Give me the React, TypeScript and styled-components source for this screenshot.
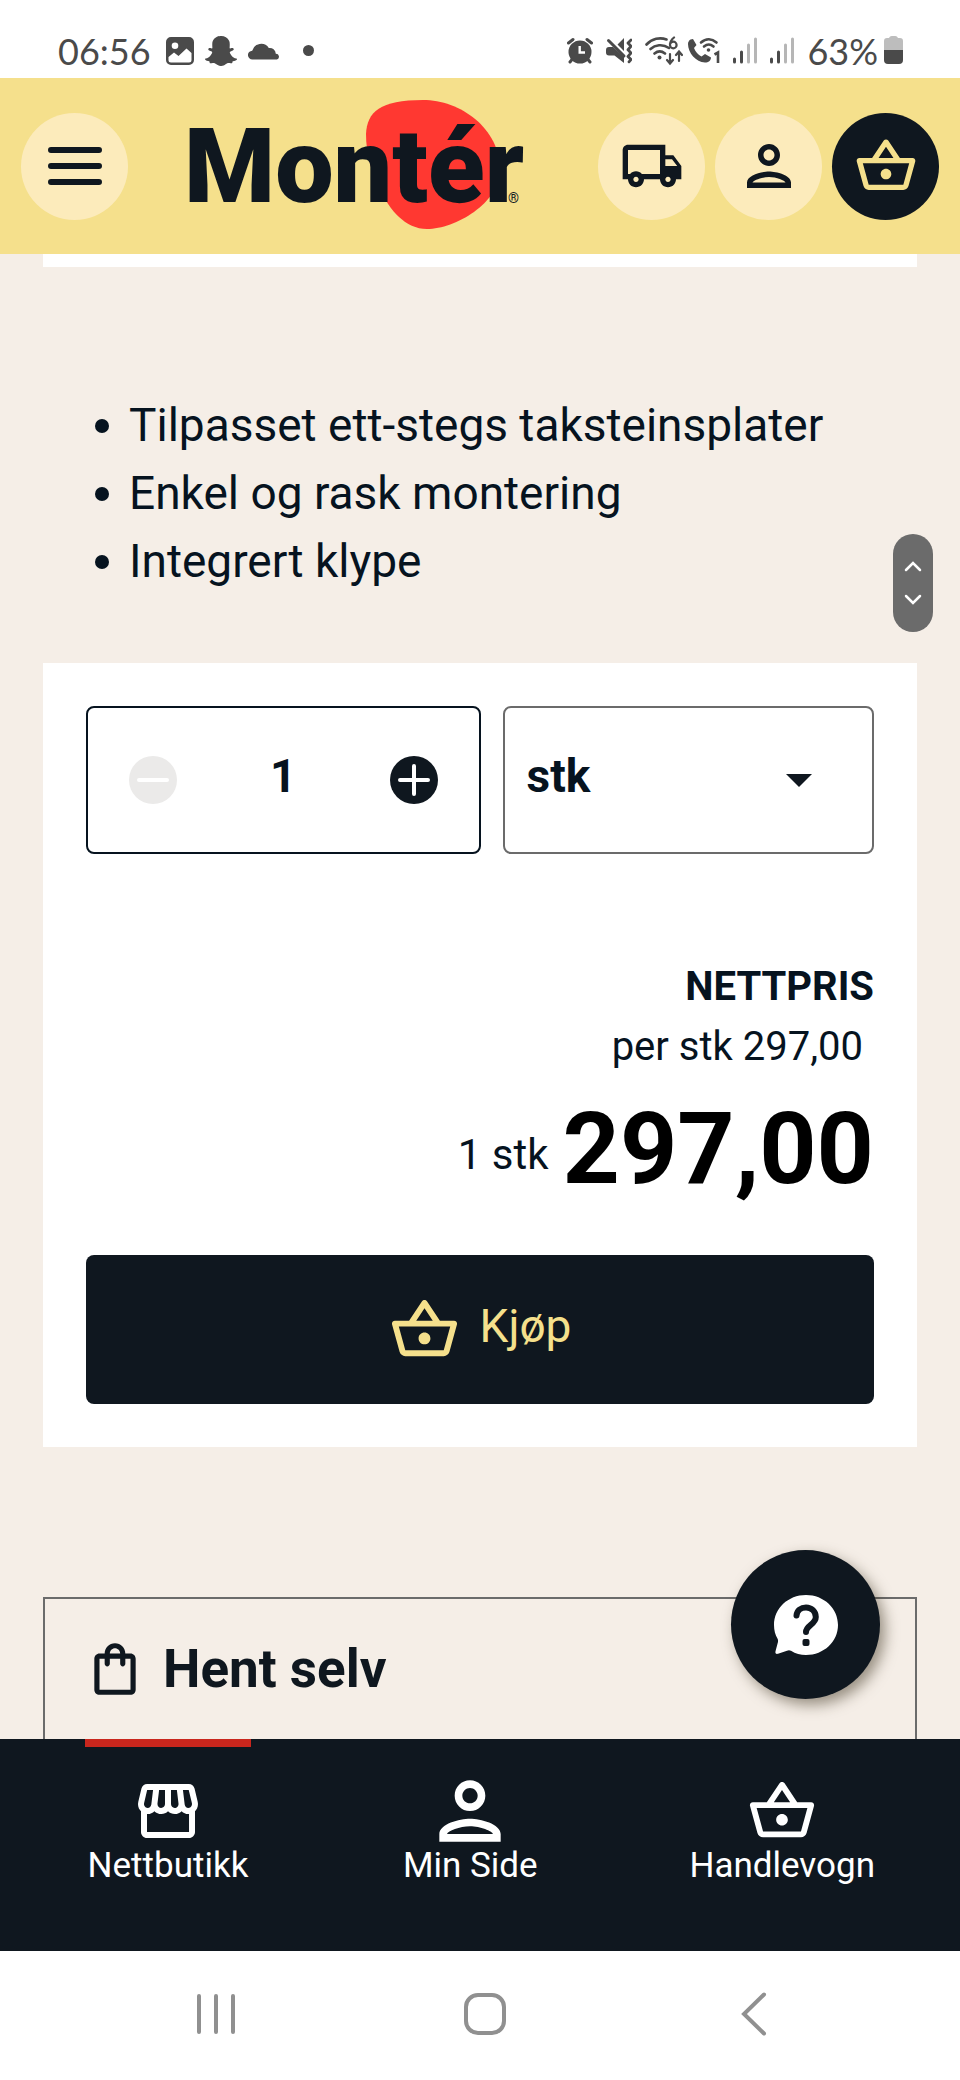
import React, { useState } from 'react';
import styled, { createGlobalStyle, css } from 'styled-components';
import {
  MdOutlineLocalShipping,
  MdOutlinePerson,
  MdOutlineShoppingBag,
  MdOutlineShoppingBasket,
  MdOutlineStorefront,
} from 'react-icons/md';
import { FaSnapchatGhost } from 'react-icons/fa';

const color = {
  ink: '#0f171f',
  text: '#06131f',
  sand: '#f5eee7',
  yellow: '#f5e08c',
  cream: '#fcebbb',
  red: '#ff3831',
  darkRed: '#c9261d',
  grey: '#6b6b6b',
  status: '#4a4a4a',
  system: '#909090',
};

const GlobalStyle = createGlobalStyle`
  *, *::before, *::after { box-sizing: border-box; }
  body {
    margin: 0;
    background: ${color.sand};
    color: ${color.text};
    font-family: Roboto, "Liberation Sans", sans-serif;
  }
  button, input, select { font: inherit; color: inherit; margin: 0; }
  svg { display: block; flex: none; }
`;

const Screen = styled.div`
  display: flex;
  flex-direction: column;
  min-height: 100vh;
`;

/* Phone status bar */
const StatusBar = styled.div`
  display: flex;
  justify-content: space-between;
  align-items: center;
  height: 78px;
  padding: 23px 57px 0 58px;
  background: #fff;
  color: ${color.status};
  font-family: Lato, sans-serif;
  font-size: 36px;
  line-height: 40px;
`;

const StatusGroup = styled.div<{ $gap: number }>`
  display: flex;
  align-items: center;
  gap: ${(p) => p.$gap}px;
`;

const Time = styled.time`
  margin-right: 4px;
`;

const Dot = styled.span`
  width: 11px;
  height: 11px;
  margin-left: 12px;
  border-radius: 50%;
  background: currentColor;
`;

/* Shop header */
const Header = styled.header`
  display: flex;
  align-items: center;
  height: 176px;
  padding: 0 21px;
  background: ${color.yellow};
`;

const RoundButton = styled.button<{ $dark?: boolean }>`
  display: grid;
  place-items: center;
  flex: none;
  width: 107px;
  height: 107px;
  padding: 0;
  border: 0;
  border-radius: 50%;
  background: ${(p) => (p.$dark ? color.ink : color.cream)};
  color: ${(p) => (p.$dark ? color.yellow : color.ink)};
`;

const HeaderActions = styled.div`
  display: flex;
  gap: 10px;
  margin-left: auto;
`;

const Logo = styled.a`
  position: relative;
  margin: 2px 0 0 56px;
  color: ${color.ink};
  font-size: 104px;
  font-weight: 900;
  line-height: 120px;
  text-decoration: none;
`;

const LogoBlob = styled.svg`
  position: absolute;
  top: -7px;
  left: 182px;
`;

const LogoName = styled.span`
  position: relative;
`;

const Registered = styled.span`
  position: absolute;
  top: 84px;
  left: 324px;
  font-size: 14px;
  font-weight: 400;
  line-height: 14px;
`;

/* Product content */
const Main = styled.main`
  position: relative;
  display: flex;
  flex-direction: column;
  flex: 1;
  padding: 0 43px;
`;

const PreviousCard = styled.div`
  height: 13px;
  background: #fff;
`;

const Features = styled.ul`
  margin: 124px 0 68px;
  padding: 0 0 0 86px;
  list-style: none;
  font-size: 46px;
  line-height: 68px;
`;

const Feature = styled.li`
  position: relative;

  &::before {
    content: '';
    position: absolute;
    top: 28px;
    left: -34px;
    width: 14px;
    height: 14px;
    border-radius: 50%;
    background: currentColor;
  }
`;

const BuyCard = styled.section`
  padding: 43px 43px;
  background: #fff;
`;

const Fields = styled.div`
  display: grid;
  grid-template-columns: minmax(0, 17fr) minmax(0, 16fr);
  gap: 22px;
`;

const fieldBox = css`
  height: 148px;
  border: 2px solid;
  border-radius: 8px;
  background: #fff;
`;

const Stepper = styled.div`
  ${fieldBox}
  display: flex;
  align-items: center;
  padding: 0 41px;
  border-color: ${color.text};
`;

const StepButton = styled.button`
  display: grid;
  place-items: center;
  flex: none;
  width: 48px;
  height: 48px;
  padding: 0;
  border: 0;
  border-radius: 50%;
  background: ${color.ink};
  color: #fff;

  &:disabled {
    background: #ebeae9;
    color: #fff;
  }
`;

const Quantity = styled.input`
  flex: 1;
  min-width: 0;
  height: 100%;
  padding: 0 0 8px;
  border: 0;
  outline: 0;
  background: transparent;
  font-size: 46px;
  font-weight: 700;
  text-align: center;
`;

const UnitField = styled.div`
  position: relative;
`;

const UnitSelect = styled.select`
  ${fieldBox}
  appearance: none;
  width: 100%;
  padding: 0 24px 8px 22px;
  border-color: ${color.grey};
  font-size: 46px;
  font-weight: 700;
`;

const Caret = styled.svg`
  position: absolute;
  top: 68px;
  right: 62px;
  pointer-events: none;
`;

const Prices = styled.div`
  display: flex;
  flex-direction: column;
  align-items: flex-end;
  margin: 103px 0 46px;
  font-size: 40px;
  line-height: 60px;
`;

const PriceLabel = styled.strong`
  font-weight: 700;
`;

const UnitPrice = styled.span`
  padding-right: 11px;
`;

const TotalRow = styled.div`
  display: flex;
  align-items: center;
  gap: 14px;
  margin-top: 12px;
  line-height: 120px;
`;

const TotalQuantity = styled.span`
  padding-top: 12px;
  font-size: 42px;
  line-height: 60px;
`;

const Total = styled.strong`
  color: #000;
  font-size: 100px;
  font-weight: 700;
`;

const BuyButton = styled.button`
  display: flex;
  justify-content: center;
  align-items: center;
  gap: 20px;
  width: 100%;
  height: 149px;
  padding: 0;
  border: 0;
  border-radius: 8px;
  background: ${color.ink};
  color: ${color.yellow};
  font-size: 46px;
`;

const BuyLabel = styled.span`
  padding-bottom: 8px;
`;

const Pickup = styled.section`
  flex: 1;
  margin-top: 150px;
  padding: 38px 39px;
  border: 2px solid ${color.grey};
  border-bottom: 0;
`;

const PickupTitle = styled.h2`
  display: flex;
  align-items: center;
  gap: 17px;
  margin: 0;
  color: ${color.ink};
  font-size: 53px;
  font-weight: 700;
  line-height: 64px;
`;

/* Floating controls */
const ScrollPill = styled.div`
  position: absolute;
  top: 280px;
  right: 27px;
  display: flex;
  flex-direction: column;
  justify-content: space-between;
  align-items: center;
  width: 40px;
  height: 98px;
  padding: 26px 0;
  border-radius: 20px;
  background: ${color.grey};
`;

const HelpButton = styled.button`
  position: absolute;
  right: 80px;
  bottom: 40px;
  display: grid;
  place-items: center;
  width: 149px;
  height: 149px;
  padding: 0;
  border: 0;
  border-radius: 50%;
  background: ${color.ink};
  box-shadow: 5px 6px 14px rgba(60, 50, 30, 0.5);
`;

/* Bottom navigation */
const TabBar = styled.nav`
  display: flex;
  justify-content: space-between;
  align-items: flex-start;
  height: 212px;
  padding: 0 85px;
  background: ${color.ink};
`;

const Tab = styled.a<{ $active?: boolean }>`
  display: flex;
  flex-direction: column;
  align-items: center;
  gap: 7px;
  min-width: 166px;
  padding-top: 36px;
  border-top: 8px solid ${(p) => (p.$active ? color.darkRed : 'transparent')};
  color: #fff;
  font-size: 35px;
  line-height: 40px;
  text-decoration: none;
`;

const TabIcon = styled.span`
  display: flex;
  justify-content: center;
  align-items: center;
  height: 56px;
`;

const SystemBar = styled.div`
  display: flex;
  justify-content: space-between;
  align-items: flex-start;
  height: 129px;
  padding: 31px 174px 0 184px;
  background: #fff;
`;

const SystemButton = styled.button`
  display: grid;
  place-items: center;
  width: 64px;
  height: 64px;
  padding: 0;
  border: 0;
  background: none;
  color: ${color.system};
`;

const ImageIcon = () => (
  <svg width="28" height="28" viewBox="0 0 28 28" aria-hidden="true">
    <path
      fill="currentColor"
      fillRule="evenodd"
      d="M5 0h18a5 5 0 0 1 5 5v18a5 5 0 0 1-5 5H5a5 5 0 0 1-5-5V5a5 5 0 0 1 5-5ZM9 5.500a3.300 3.300 0 1 0 0 6.600 3.300 3.300 0 0 0 0-6.600ZM2.500 20v3A2.500 2.500 0 0 0 5 25.500h18a2.500 2.500 0 0 0 2.500-2.500v-7L20.500 11.500 12.500 19 8 15.500Z"
    />
  </svg>
);

const CloudIcon = () => (
  <svg width="32" height="18" viewBox="0 0 32 18" aria-hidden="true">
    <path
      fill="currentColor"
      d="M4.500 17.500A4.400 4.400 0 0 1 4.200 8.700 9.200 9.200 0 0 1 20.800 6 6 6 0 0 1 27.800 11.700 3 3 0 0 1 29 17.500Z"
    />
  </svg>
);

const AlarmIcon = () => (
  <svg width="26" height="32" viewBox="0 0 26 32" aria-hidden="true">
    <circle cx="13" cy="17" r="11.500" fill="currentColor" />
    <path
      d="M1.500 8 6 4.500M24.500 8 20 4.500M5 24.500 3 27M21 24.500l2 2.500"
      stroke="currentColor"
      strokeWidth="3"
      strokeLinecap="round"
      fill="none"
    />
    <path d="M12.700 11v6.500H18" stroke="#fff" strokeWidth="2.400" fill="none" />
  </svg>
);

const MuteIcon = () => (
  <svg width="26" height="32" viewBox="0 0 26 32" aria-hidden="true">
    <path fill="currentColor" d="M3 12h4l11 10v6L8.500 20.500H3a3 3 0 0 1-3-3V15a3 3 0 0 1 3-3ZM18 3v13L11.500 9.500Z" />
    <path d="M2.500 5.500 18 21" stroke="currentColor" strokeWidth="3" strokeLinecap="round" />
    <path
      d="M25 5 22 8l3 3.300-3 3.400 3 3.300-3 3.400 3 3-2 2.400"
      stroke="currentColor"
      strokeWidth="2.800"
      strokeLinecap="round"
      strokeLinejoin="round"
      fill="none"
    />
  </svg>
);

const WifiIcon = () => (
  <svg width="38" height="32" viewBox="0 0 38 32" aria-hidden="true">
    <g fill="none" stroke="currentColor" strokeWidth="2.600" strokeLinecap="round">
      <path d="M1.500 9.500C7 3.500 15 2 21.500 4.500M5.500 14c4.500-4 12-5.500 18.500-1M9.500 18.500c3-2.500 7-2.800 10.500 0" />
      <path
        strokeWidth="2.200"
        d="M29 2.500c-2.500 2-4 5-4 7.500a3.300 3.300 0 1 0 3.300-3.300c-1.500 0-2.700.8-3.300 2.300M25 19v9m-3-3 3 3.500 3-3.500M34 26v-9m-3 3 3-3.500 3 3.500"
      />
    </g>
    <circle cx="14.500" cy="22.500" r="2" fill="currentColor" />
  </svg>
);

const CallIcon = () => (
  <svg width="32" height="32" viewBox="0 0 32 32" aria-hidden="true">
    <path
      fill="currentColor"
      d="M2.500 4.500 5 4l3.500 6-2.500 3c1.500 4 4 6.500 7.500 8.500l3.500-2.500 6 3.500c0 3-2.500 5-6 5C8 27 0 18 0 9c0-2 1-3.500 2.500-4.500Z"
    />
    <g fill="none" stroke="currentColor" strokeWidth="2.600" strokeLinecap="round">
      <path d="M13 7.500c5-4.500 11-4 15.500 0M16 11.500c3-2.500 6.500-2.500 9.500 0" />
      <path strokeLinecap="butt" d="M26.500 19.500 30 17.500V28" />
    </g>
    <circle cx="20.500" cy="15" r="1.800" fill="currentColor" />
  </svg>
);

const SignalIcon = () => (
  <svg width="24" height="32" viewBox="0 0 24 32" aria-hidden="true">
    <g stroke="currentColor" strokeWidth="3" strokeLinecap="round">
      <path d="M1.500 24v3M8.500 17v10" />
      <path opacity=".4" d="M15.500 10v17M22.500 4v23" />
    </g>
  </svg>
);

const BatteryIcon = () => (
  <svg width="19" height="32" viewBox="0 0 19 32" aria-hidden="true">
    <path fill="#bdbdbd" d="M0 15V6a3 3 0 0 1 3-3h2a3 3 0 0 1 3-2h3a3 3 0 0 1 3 2h2a3 3 0 0 1 3 3v9Z" />
    <path fill="currentColor" d="M0 15h19v10a4 4 0 0 1-4 4H4a4 4 0 0 1-4-4Z" />
  </svg>
);

const MenuIcon = () => (
  <svg width="54" height="42" viewBox="0 0 54 42" aria-hidden="true">
    <path d="M3 5h48M3 21h48M3 37h48" stroke="currentColor" strokeWidth="6" strokeLinecap="round" />
  </svg>
);

const StepIcon = ({ plus }: { plus?: boolean }) => (
  <svg width="32" height="32" viewBox="0 0 32 32" aria-hidden="true">
    <path
      d={plus ? 'M2 16h28M16 2v28' : 'M2 16h28'}
      stroke="currentColor"
      strokeWidth="4"
      strokeLinecap="round"
    />
  </svg>
);

const Chevron = ({ down }: { down?: boolean }) => (
  <svg width="18" height="12" viewBox="0 0 18 12" aria-hidden="true">
    <path
      d={down ? 'M2 2l7 7 7-7' : 'M2 10l7-7 7 7'}
      fill="none"
      stroke="#fff"
      strokeWidth="2.500"
      strokeLinecap="round"
    />
  </svg>
);

const HelpIcon = () => (
  <svg width="66" height="62" viewBox="0 0 66 62" aria-hidden="true">
    <path
      fill="#fff"
      d="M33 1C51 1 65 14.500 65 31S51 61 33 61c-5.500 0-10.500-1.300-15-4.200-1.500-.8-2.700-.7-4 0L5 59.800c-2 .5-3-.5-2.500-2.600L4.700 49c.5-1.600.5-2.500 0-4C2.200 41 1 36 1 31 1 14.500 15 1 33 1Z"
    />
    <path
      d="M23.500 21.500c.5-5 4.500-8 9.500-8 5.500 0 9.800 4 9.800 9.500 0 7.500-9.800 8-9.800 15"
      fill="none"
      stroke={color.ink}
      strokeWidth="6"
      strokeLinecap="round"
    />
    <rect x="29.500" y="45" width="7" height="7" rx="2" fill={color.ink} />
  </svg>
);

const features = ['Tilpasset ett-stegs taksteinsplater', 'Enkel og rask montering', 'Integrert klype'];

const tabs = [
  { label: 'Nettbutikk', icon: <MdOutlineStorefront size={72} />, active: true },
  { label: 'Min Side', icon: <MdOutlinePerson size={92} /> },
  { label: 'Handlevogn', icon: <MdOutlineShoppingBasket size={70} /> },
];

const price = 297;
const format = (value: number) => value.toFixed(2).replace('.', ',');

export default function App() {
  const [quantity, setQuantity] = useState(1);

  return (
    <>
      <GlobalStyle />
      <Screen>
        <StatusBar>
          <StatusGroup $gap={11}>
            <Time>06:56</Time>
            <ImageIcon />
            <FaSnapchatGhost size={32} aria-hidden="true" />
            <CloudIcon />
            <Dot />
          </StatusGroup>
          <StatusGroup $gap={13}>
            <AlarmIcon />
            <MuteIcon />
            <StatusGroup $gap={5}>
              <WifiIcon />
              <CallIcon />
            </StatusGroup>
            <SignalIcon />
            <SignalIcon />
            <StatusGroup $gap={6}>
              <span>63%</span>
              <BatteryIcon />
            </StatusGroup>
          </StatusGroup>
        </StatusBar>

        <Header>
          <RoundButton type="button" aria-label="Meny">
            <MenuIcon />
          </RoundButton>
          <Logo href="#">
            <LogoBlob width="134" height="129" viewBox="366 100 134 129" aria-hidden="true">
              <path
                fill={color.red}
                d="M366 134C367 112 380 100 423 100 460 100 500 128 500 170 500 203 455 229 427 229 405 229 390 210 380 190 372 172 366 155 366 134Z"
              />
            </LogoBlob>
            <LogoName>Montér</LogoName>
            <Registered>®</Registered>
          </Logo>
          <HeaderActions>
            <RoundButton type="button" aria-label="Levering">
              <MdOutlineLocalShipping size={64} />
            </RoundButton>
            <RoundButton type="button" aria-label="Min side">
              <MdOutlinePerson size={66} />
            </RoundButton>
            <RoundButton type="button" aria-label="Handlevogn" $dark>
              <MdOutlineShoppingBasket size={64} />
            </RoundButton>
          </HeaderActions>
        </Header>

        <Main>
          <PreviousCard />
          <Features>
            {features.map((feature) => (
              <Feature key={feature}>{feature}</Feature>
            ))}
          </Features>

          <BuyCard>
            <Fields>
              <Stepper>
                <StepButton
                  type="button"
                  aria-label="Færre"
                  disabled={quantity <= 1}
                  onClick={() => setQuantity(quantity - 1)}
                >
                  <StepIcon />
                </StepButton>
                <Quantity
                  aria-label="Antall"
                  inputMode="numeric"
                  value={quantity}
                  onChange={(event) => setQuantity(Math.max(1, Number(event.target.value) || 1))}
                />
                <StepButton type="button" aria-label="Flere" onClick={() => setQuantity(quantity + 1)}>
                  <StepIcon plus />
                </StepButton>
              </Stepper>
              <UnitField>
                <UnitSelect aria-label="Enhet" defaultValue="stk">
                  <option value="stk">stk</option>
                </UnitSelect>
                <Caret width="26" height="13" viewBox="0 0 26 13" aria-hidden="true">
                  <path d="M0 0h26L13 13Z" fill={color.ink} />
                </Caret>
              </UnitField>
            </Fields>

            <Prices>
              <PriceLabel>NETTPRIS</PriceLabel>
              <UnitPrice>per stk {format(price)}</UnitPrice>
              <TotalRow>
                <TotalQuantity>{quantity} stk</TotalQuantity>
                <Total>{format(price * quantity)}</Total>
              </TotalRow>
            </Prices>

            <BuyButton type="button">
              <MdOutlineShoppingBasket size={71} aria-hidden="true" />
              <BuyLabel>Kjøp</BuyLabel>
            </BuyButton>
          </BuyCard>

          <Pickup>
            <PickupTitle>
              <MdOutlineShoppingBag size={62} aria-hidden="true" />
              Hent selv
            </PickupTitle>
          </Pickup>

          <ScrollPill aria-hidden="true">
            <Chevron />
            <Chevron down />
          </ScrollPill>
          <HelpButton type="button" aria-label="Hjelp">
            <HelpIcon />
          </HelpButton>
        </Main>

        <TabBar>
          {tabs.map((tab) => (
            <Tab key={tab.label} href="#" $active={tab.active}>
              <TabIcon>{tab.icon}</TabIcon>
              {tab.label}
            </Tab>
          ))}
        </TabBar>

        <SystemBar>
          <SystemButton type="button" aria-label="Siste apper">
            <svg width="40" height="44" viewBox="0 0 40 44">
              <path d="M3 4v36M20 4v36M37 4v36" stroke="currentColor" strokeWidth="4" strokeLinecap="round" />
            </svg>
          </SystemButton>
          <SystemButton type="button" aria-label="Hjem">
            <svg width="42" height="44" viewBox="0 0 42 44">
              <rect x="2" y="3" width="38" height="38" rx="12" fill="none" stroke="currentColor" strokeWidth="4" />
            </svg>
          </SystemButton>
          <SystemButton type="button" aria-label="Tilbake">
            <svg width="26" height="44" viewBox="0 0 26 44">
              <path d="M23 2.500 3 22l20 19.500" fill="none" stroke="currentColor" strokeWidth="4" strokeLinecap="round" />
            </svg>
          </SystemButton>
        </SystemBar>
      </Screen>
    </>
  );
}
